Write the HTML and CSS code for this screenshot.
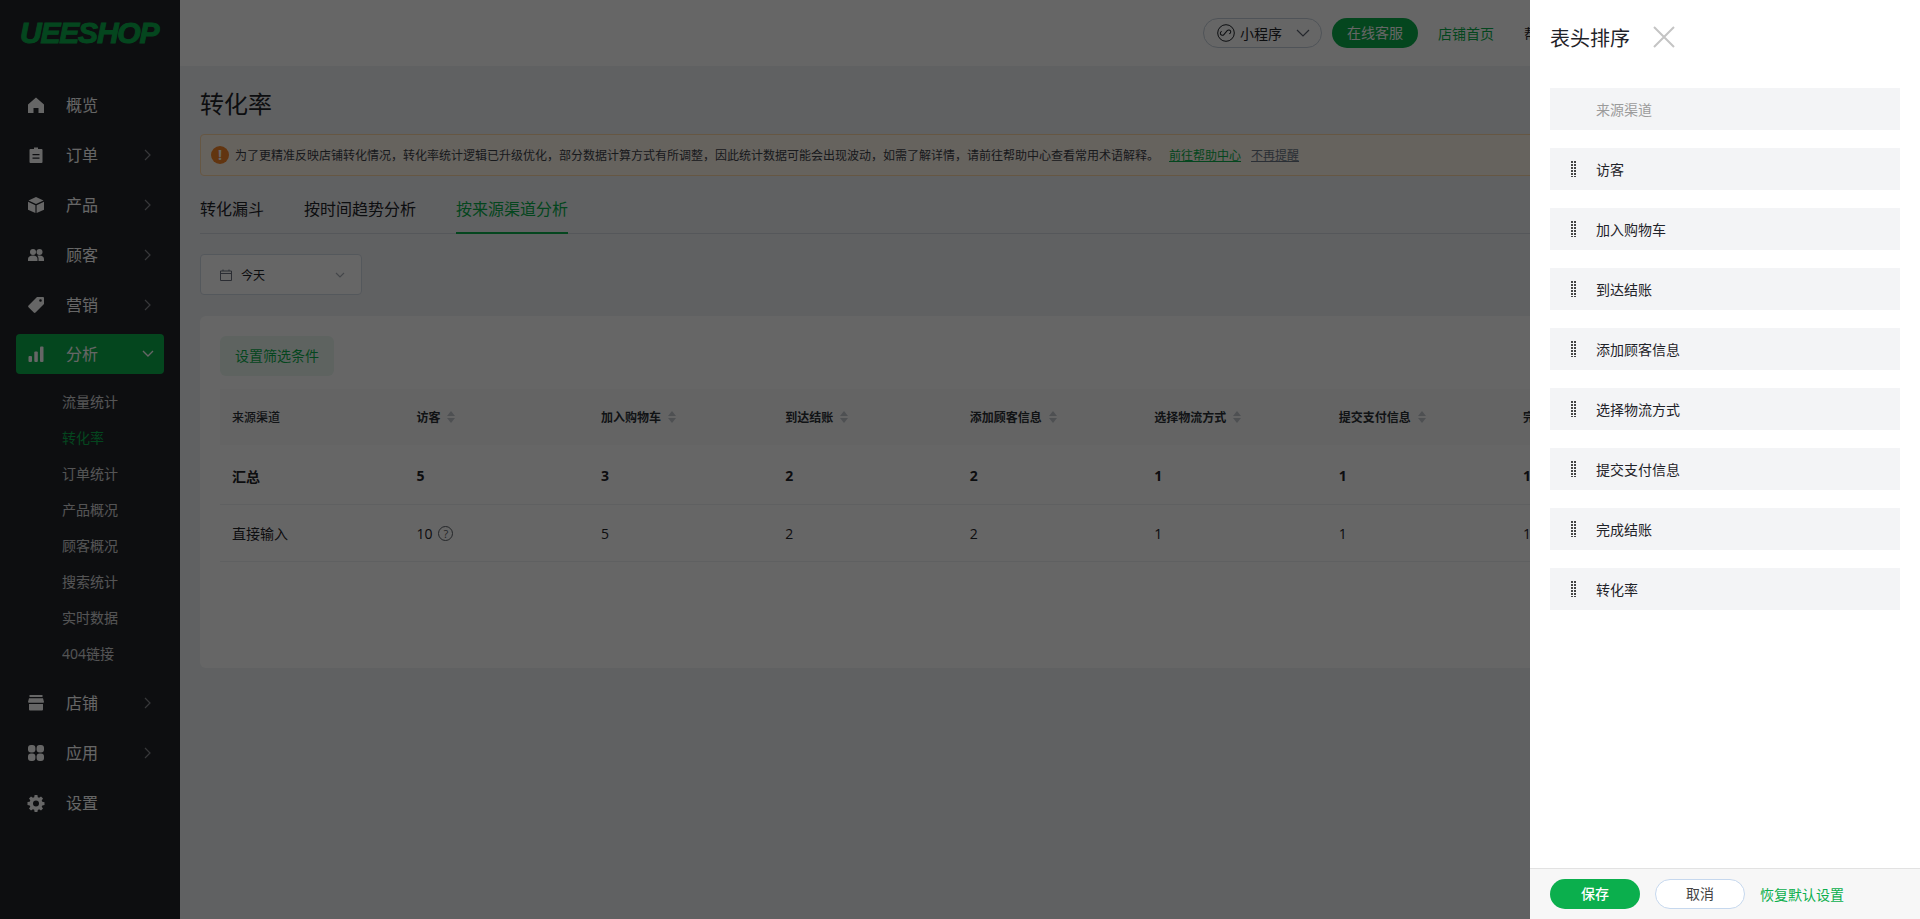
FILE: index.html
```html
<!DOCTYPE html>
<html lang="zh-CN">
<head>
<meta charset="utf-8">
<title>转化率</title>
<link rel="stylesheet" href="styles.css">
</head>
<body>
<div class="app">
  <aside class="sidebar">
    <div class="logo">
      <span class="logo-text">UEESHOP</span>
    </div>
    <nav class="nav">
      <a class="nav-item"><svg class="nav-icon" viewBox="0 0 16 16"><path d="M8 .5 0 7.5v8.500h5.500v-5h5v5H16V7.500z"/></svg><span class="nav-label">概览</span></a>
      <a class="nav-item"><svg class="nav-icon" viewBox="0 0 16 16"><path fill-rule="evenodd" d="M6 .5h4V2h3.500a1 1 0 0 1 1 1v12a1 1 0 0 1-1 1h-11a1 1 0 0 1-1-1V3a1 1 0 0 1 1-1H6zM4.500 7v1.300h7V7zm0 3.500v1.300h7v-1.300z"/></svg><span class="nav-label">订单</span><svg class="chev" viewBox="0 0 8 12"><path d="M1 1l5 5-5 5"/></svg></a>
      <a class="nav-item"><svg class="nav-icon" viewBox="0 0 16 16"><path d="M8 0 .5 3.500 8 7l7.500-3.500zM0 4.800v8L7.400 16V8.200zM16 4.800v8L8.600 16V8.200z"/></svg><span class="nav-label">产品</span><svg class="chev" viewBox="0 0 8 12"><path d="M1 1l5 5-5 5"/></svg></a>
      <a class="nav-item"><svg class="nav-icon" viewBox="0 0 16 16"><circle cx="5" cy="5" r="3"/><circle cx="11.500" cy="5" r="3"/><path d="M0 14v-2c0-2 2-3.500 5-3.500s4.500 1.500 4.500 3.500v2zM10.500 14v-2.500c0-1-.4-2-1.200-2.700.7-.2 1.400-.3 2.200-.3 2.700 0 4.500 1.500 4.500 3.500V14z"/></svg><span class="nav-label">顾客</span><svg class="chev" viewBox="0 0 8 12"><path d="M1 1l5 5-5 5"/></svg></a>
      <a class="nav-item"><svg class="nav-icon" viewBox="0 0 16 16"><path fill-rule="evenodd" d="M9 0h6a1 1 0 0 1 1 1v6L7.500 15.500a1.200 1.200 0 0 1-1.700 0L.5 10.200a1.200 1.200 0 0 1 0-1.700zM12.500 2.200a1.300 1.300 0 1 0 0 2.600 1.300 1.300 0 0 0 0-2.600z"/></svg><span class="nav-label">营销</span><svg class="chev" viewBox="0 0 8 12"><path d="M1 1l5 5-5 5"/></svg></a>
      <a class="nav-item active"><svg class="nav-icon" viewBox="0 0 16 16"><rect x="0.500" y="10" width="3.500" height="6" rx="1"/><rect x="6.300" y="5.500" width="3.500" height="10.500" rx="1"/><rect x="12" y="0.500" width="3.500" height="15.500" rx="1"/></svg><span class="nav-label">分析</span><svg class="chev-down" viewBox="0 0 12 8"><path d="M1 1l5 5 5-5"/></svg></a>
      <div class="subnav">
        <a class="sub-item">流量统计</a>
        <a class="sub-item current">转化率</a>
        <a class="sub-item">订单统计</a>
        <a class="sub-item">产品概况</a>
        <a class="sub-item">顾客概况</a>
        <a class="sub-item">搜索统计</a>
        <a class="sub-item">实时数据</a>
        <a class="sub-item">404链接</a>
      </div>
      <a class="nav-item"><svg class="nav-icon" viewBox="0 0 16 16"><path d="M1.500 0h13v2h-13zM1 3.200h14L16 7c0 .4-.4.8-1 .8H1c-.6 0-1-.4-1-.8zM1 9h14v5.500a1 1 0 0 1-1 1H2a1 1 0 0 1-1-1z"/></svg><span class="nav-label">店铺</span><svg class="chev" viewBox="0 0 8 12"><path d="M1 1l5 5-5 5"/></svg></a>
      <a class="nav-item"><svg class="nav-icon" viewBox="0 0 16 16"><rect x="0" y="0" width="7.400" height="7.400" rx="3"/><rect x="8.600" y="0" width="7.400" height="7.400" rx="3"/><rect x="0" y="8.600" width="7.400" height="7.400" rx="3"/><rect x="8.600" y="8.600" width="7.400" height="7.400" rx="3"/></svg><span class="nav-label">应用</span><svg class="chev" viewBox="0 0 8 12"><path d="M1 1l5 5-5 5"/></svg></a>
      <a class="nav-item"><svg class="nav-icon" viewBox="0 0 16 16"><path fill-rule="evenodd" d="M6.600 0h2.800l.4 2.200 1.300.6 1.900-1.200 2 2-1.300 1.800.6 1.400 2.200.4v2.800l-2.200.4-.6 1.300 1.300 1.900-2 2-1.900-1.300-1.300.6-.4 2.100H6.600l-.4-2.200-1.300-.5L3 15.600l-2-2 1.300-1.900-.6-1.300L-.5 9.900V7.100l2.200-.4.6-1.400L1 3.500l2-2 1.900 1.300 1.300-.6zM8 5.500a3 3 0 1 0 0 6 3 3 0 0 0 0-6z"/></svg><span class="nav-label">设置</span></a>
    </nav>
  </aside>
  <div class="content">
    <header class="topbar">
      <div class="pill"><svg class="mini-icon" viewBox="0 0 18 18"><circle cx="9" cy="9" r="8.300"/><path d="M4.800 10.400a2 2 0 1 0 3.600 1.200V6.400a2 2 0 1 1 3.600 1.200" transform="rotate(40 9 9)"/></svg><span>小程序</span><svg class="pill-chev" viewBox="0 0 14 8"><path d="M1 1l6 6 6-6"/></svg></div>
      <a class="service">在线客服</a>
      <a class="top-link green">店铺首页</a>
      <a class="top-link">帮</a>
    </header>
    <main class="page">
      <h1 class="page-title">转化率</h1>
      <div class="notice">
        <span class="notice-icon">!</span>
        <span class="notice-text">为了更精准反映店铺转化情况，转化率统计逻辑已升级优化，部分数据计算方式有所调整，因此统计数据可能会出现波动，如需了解详情，请前往帮助中心查看常用术语解释。</span>
        <a class="notice-link">前往帮助中心</a>
        <a class="notice-dismiss">不再提醒</a>
      </div>
      <div class="tabs">
        <a class="tab">转化漏斗</a>
        <a class="tab">按时间趋势分析</a>
        <a class="tab selected">按来源渠道分析</a>
      </div>
      <div class="date-select">
        <svg class="cal" viewBox="0 0 12 12"><path d="M.5 2h11v9.500H.5zM.5 4.500h11M3 .5V2M9 .5V2"/></svg>
        <span>今天</span>
        <svg class="date-chev" viewBox="0 0 10 6"><path d="M1 1l4 4 4-4"/></svg>
      </div>
      <section class="card">
        <a class="filter-btn">设置筛选条件</a>
        <div class="table">
          <div class="row head">
            <div class="cell">来源渠道</div>
            <div class="cell">访客<i class="sort"></i></div>
            <div class="cell">加入购物车<i class="sort"></i></div>
            <div class="cell">到达结账<i class="sort"></i></div>
            <div class="cell">添加顾客信息<i class="sort"></i></div>
            <div class="cell">选择物流方式<i class="sort"></i></div>
            <div class="cell">提交支付信息<i class="sort"></i></div>
            <div class="cell">完成结账<i class="sort"></i></div>
            <div class="cell">转化率<i class="sort"></i></div>
          </div>
          <div class="row total">
            <div class="cell">汇总</div><div class="cell">5</div><div class="cell">3</div><div class="cell">2</div><div class="cell">2</div><div class="cell">1</div><div class="cell">1</div><div class="cell">1</div><div class="cell">20%</div>
          </div>
          <div class="row">
            <div class="cell">直接输入</div><div class="cell">10<span class="help">?</span></div><div class="cell">5</div><div class="cell">2</div><div class="cell">2</div><div class="cell">1</div><div class="cell">1</div><div class="cell">1</div><div class="cell">10%</div>
          </div>
        </div>
      </section>
    </main>
  </div>
</div>
<div class="overlay"></div>
<aside class="drawer">
  <div class="drawer-head">
    <h2 class="drawer-title">表头排序</h2>
    <svg class="close" viewBox="0 0 22 22"><path d="M1 1l20 20M21 1 1 21"/></svg>
  </div>
  <div class="sort-list">
    <div class="sort-row fixed">来源渠道</div>
    <div class="sort-row"><i class="grip"></i>访客</div>
    <div class="sort-row"><i class="grip"></i>加入购物车</div>
    <div class="sort-row"><i class="grip"></i>到达结账</div>
    <div class="sort-row"><i class="grip"></i>添加顾客信息</div>
    <div class="sort-row"><i class="grip"></i>选择物流方式</div>
    <div class="sort-row"><i class="grip"></i>提交支付信息</div>
    <div class="sort-row"><i class="grip"></i>完成结账</div>
    <div class="sort-row"><i class="grip"></i>转化率</div>
  </div>
  <div class="drawer-foot">
    <a class="btn save">保存</a>
    <a class="btn cancel">取消</a>
    <a class="restore">恢复默认设置</a>
  </div>
</aside>
</body>
</html>
```
FILE: styles.css
```css
* { box-sizing: border-box; }
html, body { margin: 0; height: 100%; overflow: hidden; }
body {
  font-family: "Open Sans", "Noto Sans CJK SC", sans-serif;
  font-size: 14px;
  color: #1f2329;
  background: #f1f3f5;
}
a { color: inherit; text-decoration: none; }
h1, h2 { margin: 0; font-weight: 400; }
.app { display: flex; height: 919px; }

.sidebar { width: 180px; flex: none; background: #21242a; }
.logo { height: 66px; padding: 15px 0 0 20px; }
.logo-text {
  display: block;
  font-family: "Liberation Sans", sans-serif;
  font-size: 30px;
  line-height: 36px;
  font-weight: 700;
  font-style: italic;
  letter-spacing: -1.200px;
  color: #0baf4d;
  -webkit-text-stroke: 1px #0baf4d;
}
.nav { padding: 19px 16px 0; }
.nav-item {
  display: flex;
  align-items: center;
  height: 40px;
  margin-bottom: 10px;
  padding: 0 12px;
  border-radius: 4px;
  font-size: 16px;
  color: #fff;
}
.nav-item.active { background: #0baf4d; margin-top: -1px; margin-bottom: 10px; }
.nav-icon { width: 16px; height: 16px; flex: none; fill: #fff; overflow: visible; }
.nav-label { margin-left: 22px; flex: 1; padding-bottom: 2px; }
.chev { width: 8px; height: 12px; fill: none; stroke: #8a8c90; stroke-width: 1.200; }
.chev-down { width: 12px; height: 8px; fill: none; stroke: #fff; stroke-width: 1.400; margin-right: -2px; }
.subnav { margin: 0 0 11px; }
.sub-item { display: block; height: 36px; line-height: 36px; padding-left: 46px; font-size: 14px; color: #fff; opacity: .8; }
.sub-item.current { color: #0baf4d; opacity: 1; }

.content { width: 1740px; flex: none; }
.topbar {
  height: 66px;
  background: #fff;
  display: flex;
  align-items: center;
  padding-left: 1023px;
  white-space: nowrap;
}
.pill {
  display: flex;
  align-items: center;
  width: 119px;
  height: 30px;
  padding-left: 13px;
  border: 1px solid #c6d0dc;
  border-radius: 15px;
  color: #1f2329;
}
.mini-icon { width: 18px; height: 18px; fill: none; stroke: #1f2329; stroke-width: 1; margin-right: 5px; }
.pill-chev { width: 14px; height: 8px; fill: none; stroke: #5a6270; stroke-width: 1.200; margin-left: 14px; }
.service {
  width: 86px; height: 30px; margin-left: 10px;
  border-radius: 15px;
  background: #0baf4d;
  color: #fff;
  text-align: center;
  line-height: 30px;
}
.top-link { margin-left: 20px; width: 66px; }
.top-link.green { color: #0baf4d; }

.page { padding: 0 20px; height: 853px; }
.page-title { font-size: 24px; line-height: 34px; padding-top: 21px; height: 68px; }
.notice {
  display: flex;
  align-items: center;
  height: 42px;
  padding-left: 10px;
  border: 1px solid #ffd9a8;
  border-radius: 4px;
  background: #fff7ec;
  font-size: 12px;
  white-space: nowrap;
  color: #3d4249;
}
.notice-icon {
  width: 18px; height: 18px; flex: none;
  border-radius: 50%;
  background: #f5852a;
  color: #fff;
  text-align: center;
  font: 700 14px/18px "Open Sans", sans-serif;
  margin-right: 6px;
}
.notice-link { margin-left: 10px; color: #0baf4d; text-decoration: underline; }
.notice-dismiss { margin-left: 10px; color: #6b7686; text-decoration: underline; }

.tabs { display: flex; gap: 40px; height: 58px; border-bottom: 1px solid #d5dae0; padding-top: 18px; font-size: 16px; }
.tab { height: 40px; line-height: 30px; color: #1f2329; }
.tab.selected { color: #0baf4d; border-bottom: 2px solid #0baf4d; }

.date-select {
  display: flex;
  align-items: center;
  width: 162px;
  height: 41px;
  margin-top: 20px;
  padding: 0 16px 0 19px;
  border: 1px solid #d3dbe6;
  border-radius: 4px;
  background: #fff;
  font-size: 12px;
}
.cal { width: 12px; height: 12px; fill: none; stroke: #6b7280; stroke-width: 1; margin-right: 9px; }
.date-chev { width: 10px; height: 6px; fill: none; stroke: #aab0b8; stroke-width: 1.200; margin-left: auto; }

.card { margin-top: 21px; height: 352px; padding: 20px; border-radius: 6px; background: #fff; }
.filter-btn {
  display: block;
  width: 114px; height: 40px;
  border-radius: 6px;
  background: #ebf7f0;
  color: #0baf4d;
  font-size: 14px;
  line-height: 40px;
  text-align: center;
}
.table { margin-top: 13px; }
.row { display: grid; grid-template-columns: repeat(9, 1fr); height: 57px; align-items: center; border-bottom: 1px solid #edf0f2; font-size: 14px; }
.row.head { height: 56px; border-bottom: 0; background: #fafbfb; font-weight: 700; font-size: 12px; margin-bottom: 2px; color: #2c3036; }
.row.head .cell:first-child { font-weight: 500; }
.row.total { height: 58px; font-weight: 700; }
.cell { padding-left: 12px; display: flex; align-items: center; white-space: nowrap; }
.sort { width: 8px; height: 12px; margin-left: 7px; position: relative; }
.sort::before, .sort::after {
  content: "";
  position: absolute;
  left: 0;
  border-left: 4px solid transparent;
  border-right: 4px solid transparent;
}
.sort::before { top: 0; border-bottom: 5px solid #c2c7ce; }
.sort::after { bottom: 0; border-top: 5px solid #c2c7ce; }
.help {
  width: 15px; height: 15px; margin-left: 6px;
  border: 1px solid #5a5f66;
  border-radius: 50%;
  font-size: 11px;
  line-height: 13px;
  text-align: center;
  color: #5a5f66;
}

.overlay { position: fixed; left: 0; top: 0; right: 0; bottom: 0; background: rgba(0, 0, 0, .6); }
.drawer {
  position: fixed;
  top: 0; right: 0; bottom: 0;
  width: 390px;
  background: #fff;
  display: flex;
  flex-direction: column;
}
.drawer-head { display: flex; align-items: center; height: 74px; padding: 0 20px; }
.drawer-title { font-size: 20px; color: #1f2329; }
.close { width: 22px; height: 22px; margin-left: 23px; fill: none; stroke: #c4c4c4; stroke-width: 2; }
.sort-list { flex: 1; padding: 14px 20px 0; display: flex; flex-direction: column; gap: 18px; }
.sort-row {
  display: flex;
  align-items: center;
  height: 42px;
  padding-left: 46px;
  background: #f3f4f6;
  font-size: 14px;
  color: #1f2329;
  position: relative;
}
.sort-row.fixed { color: #9b9b9b; }
.grip {
  position: absolute;
  left: 21px;
  top: 13px;
  width: 6px;
  height: 16px;
  background-image: radial-gradient(circle at 1px 1px, #444 1.100px, transparent 1.300px);
  background-size: 3px 3px;
}
.drawer-foot {
  display: flex;
  align-items: center;
  height: 51px;
  padding: 0 20px;
  border-top: 1px solid #e2e2e2;
  background: #f7f7f7;
}
.btn { width: 90px; height: 30px; border-radius: 15px; line-height: 28px; text-align: center; font-size: 14px; }
.save { background: #0baf4d; color: #fff; line-height: 30px; font-weight: 500; }
.cancel { margin-left: 15px; background: #fff; border: 1px solid #c6d8ee; color: #444; }
.restore { margin-left: 15px; color: #0baf4d; font-size: 14px; }
```
